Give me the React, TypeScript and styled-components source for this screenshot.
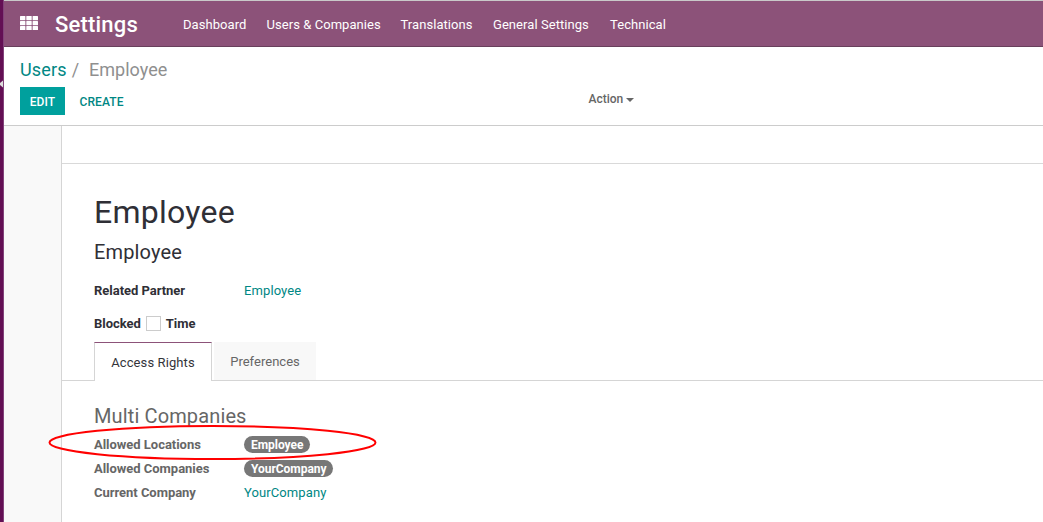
import React from "react";
import styled, { createGlobalStyle } from "styled-components";

const Global = createGlobalStyle`
  * { box-sizing: border-box; }
  body { margin: 0; background: #fff; font: 13px/20px Roboto, sans-serif; color: #666; overflow: hidden; }
  h1, h2, h3, p { margin: 0; font-weight: 400; }
`;

const Page = styled.div`
  display: flex;
  width: 1043px;
  height: 522px;
  overflow: hidden;
`;
const Rail = styled.div`
  flex: none;
  width: 4px;
  padding-top: 80px;
  background: #630f54;
  border-right: 1px solid #82427a;
`;
const RailArrow = styled.svg`
  display: block;
  width: 3px;
  height: 8px;
`;
const Main = styled.div`
  flex: 1;
  min-width: 0;
  display: flex;
  flex-direction: column;
`;
const Navbar = styled.header`
  flex: none;
  display: flex;
  align-items: center;
  height: 47px;
  padding-left: 16px;
  color: #fff;
  background: #8c5279;
  border-top: 1px solid #c9c9c9;
  border-bottom: 1px solid #68405c;
`;
const AppsIcon = styled.svg`
  display: block;
  width: 18px;
  height: 14px;
  margin-bottom: 1px;
`;
const AppTitle = styled.div`
  margin-left: 17px;
  width: 128px;
  font-size: 22px;
  font-weight: 500;
  letter-spacing: 0.2px;
  line-height: 44px;
  padding-top: 2px;
`;
const NavItem = styled.a<{ $w: number }>`
  width: ${(p) => p.$w}px;
  white-space: nowrap;
  letter-spacing: 0.06px;
  padding-top: 2px;
`;
const ControlPanel = styled.section`
  flex: none;
  height: 79px;
  padding: 11px 0 0 16px;
  border-bottom: 1px solid #ccc;
`;
const Breadcrumb = styled.div`
  display: flex;
  font-size: 18px;
  line-height: 24px;
  color: #8f8f8f;
`;
const Crumb = styled.a`
  color: #008784;
  letter-spacing: 0.15px;
`;
const Slash = styled.span`
  margin: 0 10px 0 5px;
`;
const Actions = styled.div`
  display: flex;
  margin-top: 5px;
  font-size: 12px;
  font-weight: 500;
`;
const Button = styled.button<{ $primary?: boolean }>`
  width: ${(p) => (p.$primary ? 45 : 73)}px;
  height: 28px;
  padding: 2px 0 0;
  border: 0;
  font: 500 12px/20px Roboto, sans-serif;
  letter-spacing: 0.1px;
  color: ${(p) => (p.$primary ? "#fff" : "#008784")};
  background: ${(p) => (p.$primary ? "#00a09d" : "transparent")};
`;
const ActionMenu = styled.div`
  display: flex;
  align-items: center;
  height: 24px;
  margin-left: 450.5px;
`;
const Caret = styled.svg`
  width: 8px;
  height: 4px;
  margin: 2px 0 0 3px;
`;
const Content = styled.main`
  flex: 1;
  padding-left: 57px;
  background: #f9f9f9;
`;
const Sheet = styled.div`
  height: 100%;
  background: #fff;
  border-left: 1px solid #d5d5d5;
`;
const StatusBar = styled.div`
  height: 38px;
  border-bottom: 1px solid #d9d9d9;
`;
const Identity = styled.div`
  height: 178px;
  padding: 28px 0 0 32px;
  color: #2f2f36;
`;
const Name = styled.h1`
  font-size: 32px;
  line-height: 40px;
  letter-spacing: 0.25px;
`;
const Login = styled.h2`
  margin-top: 8px;
  font-size: 20px;
  line-height: 24px;
  letter-spacing: 0.15px;
`;
const Field = styled.div<{ $top?: number }>`
  display: flex;
  align-items: center;
  margin-top: ${(p) => p.$top ?? 0}px;
  height: 24px;
`;
const Label = styled.label<{ $wide?: boolean }>`
  width: ${(p) => (p.$wide ? "150px" : "auto")};
  font-weight: 700;
  letter-spacing: -0.03px;
`;
const Link = styled.a`
  color: #008784;
  letter-spacing: 0.1px;
`;
const Box = styled.span`
  width: 15px;
  height: 15px;
  margin: 0 5px 1px;
  border: 1px solid #ccc;
  background: #fff;
`;
const Tabs = styled.div`
  display: flex;
  height: 39px;
  padding-left: 32px;
  border-bottom: 1px solid #d5d5d5;
`;
const Tab = styled.div<{ $active?: boolean }>`
  width: ${(p) => (p.$active ? 118 : 102)}px;
  height: ${(p) => (p.$active ? 39 : 38)}px;
  margin-right: 2px;
  padding-top: ${(p) => (p.$active ? 10 : 9)}px;
  text-align: center;
  letter-spacing: ${(p) => (p.$active ? 0.1 : 0.02)}px;
  color: ${(p) => (p.$active ? "#34343a" : "#666")};
  background: ${(p) => (p.$active ? "#fff" : "#f8f8f8")};
  border: ${(p) => (p.$active ? "1px solid #d5d5d5" : "0")};
  border-top: ${(p) => (p.$active ? "1px solid #8c5279" : "1px solid #f8f8f8")};
  border-bottom: 0;
`;
const Group = styled.section`
  position: relative;
  padding: 23px 0 0 32px;
`;
const GroupTitle = styled.h3`
  margin-bottom: 5px;
  font-size: 20px;
  line-height: 24px;
  letter-spacing: 0.13px;
`;
const Tag = styled.span`
  height: 17px;
  margin-bottom: 1px;
  padding: 0 7px;
  border-radius: 9px;
  font-size: 12px;
  font-weight: 700;
  line-height: 18px;
  letter-spacing: -0.04px;
  color: #fff;
  background: #777;
`;
const Highlight = styled.svg`
  position: absolute;
  left: -14px;
  top: 42px;
  width: 330px;
  height: 40px;
`;

const menu: [string, number][] = [
  ["Dashboard", 83.5],
  ["Users & Companies", 134],
  ["Translations", 92.5],
  ["General Settings", 117],
  ["Technical", 60],
];

export default function App() {
  return (
    <Page>
      <Global />
      <Rail>
        <RailArrow viewBox="0 0 3 8"><path d="M3 .5v7L0 5V3Z" fill="#ddd" /></RailArrow>
      </Rail>
      <Main>
        <Navbar>
          <AppsIcon viewBox="0 0 18 14" fill="#fff">
            {[0, 5, 10].map((y) =>
              [0, 6.3, 12.6].map((x) => <rect key={`${x}-${y}`} x={x} y={y} width="5.4" height="4.2" rx=".5" />)
            )}
          </AppsIcon>
          <AppTitle>Settings</AppTitle>
          {menu.map(([text, w]) => <NavItem key={text} $w={w}>{text}</NavItem>)}
        </Navbar>
        <ControlPanel>
          <Breadcrumb><Crumb>Users</Crumb><Slash>/</Slash><span>Employee</span></Breadcrumb>
          <Actions>
            <Button $primary>EDIT</Button>
            <Button>CREATE</Button>
            <ActionMenu>Action<Caret viewBox="0 0 8 4"><path d="M0 0h8L4 4Z" fill="#666" /></Caret></ActionMenu>
          </Actions>
        </ControlPanel>
        <Content>
          <Sheet>
            <StatusBar />
            <Identity>
              <Name>Employee</Name>
              <Login>Employee</Login>
              <Field $top={15}><Label $wide>Related Partner</Label><Link>Employee</Link></Field>
              <Field $top={9}><Label>Blocked</Label><Box /><Label>Time</Label></Field>
            </Identity>
            <Tabs><Tab $active>Access Rights</Tab><Tab>Preferences</Tab></Tabs>
            <Group>
              <GroupTitle>Multi Companies</GroupTitle>
              <Field><Label $wide>Allowed Locations</Label><Tag>Employee</Tag></Field>
              <Field><Label $wide>Allowed Companies</Label><Tag>YourCompany</Tag></Field>
              <Field><Label $wide>Current Company</Label><Link>YourCompany</Link></Field>
              <Highlight viewBox="0 0 330 40">
                <ellipse cx="164.5" cy="19.5" rx="163" ry="16.5" fill="none" stroke="#f00" strokeWidth="2" />
              </Highlight>
            </Group>
          </Sheet>
        </Content>
      </Main>
    </Page>
  );
}
